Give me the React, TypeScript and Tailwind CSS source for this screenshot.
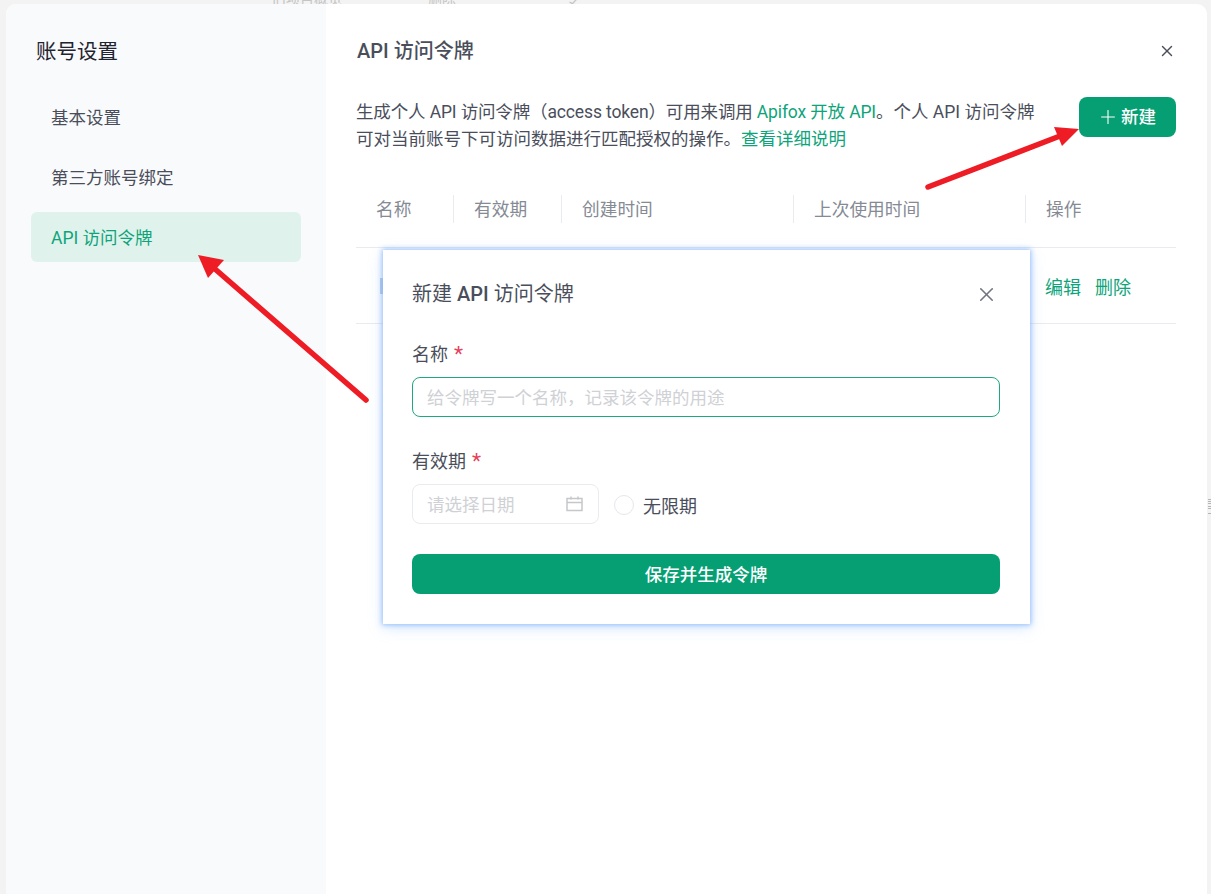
import React from "react";
import { X, Plus } from "lucide-react";

function Arrow({ d, head }: { d: string; head: string }) {
  return (
    <>
      <path d={d} stroke="#ee1c25" strokeWidth={5.5} strokeLinecap="round" fill="none" />
      <polygon points={head} fill="#ee1c25" />
    </>
  );
}

export default function App() {
  return (
    <div className="relative h-[894px] w-[1211px] overflow-hidden bg-[#f3f3f3] text-[17.5px] leading-[27px] text-[#4a4e5b] [font-family:Roboto,'Noto_Sans_CJK_SC',sans-serif]">
      <div className="flex h-[4px] overflow-hidden pl-[272px] text-[14px] leading-[8px] text-[#c4c4c4]">
        <span className="-mt-[5px] w-[156px]">旧项目概览</span>
        <span className="-mt-[5px] w-[137px]">删除</span>
        <span className="-mt-[5px]">令</span>
      </div>
      <div className="ml-[6px] flex h-[890px] w-[1201px] overflow-hidden rounded-t-[10px] bg-white">
        <aside className="flex w-[320px] flex-col bg-[#f9fafb] pl-[25px] pr-[25px]">
          <h2 className="mt-[35px] pl-[5px] text-[20.5px] leading-[27px] font-normal text-[#1f2430]">账号设置</h2>
          <nav className="mt-[26px] flex flex-col gap-[10px]">
            <div className="flex h-[50px] items-center rounded-[6px] pl-[20px] pt-[2px]">基本设置</div>
            <div className="flex h-[50px] items-center rounded-[6px] pl-[20px] pt-[2px]">第三方账号绑定</div>
            <div className="flex h-[50px] items-center rounded-[6px] bg-[#dff2ec] pl-[20px] pt-[2px] text-[#0ea47a]">API 访问令牌</div>
          </nav>
        </aside>
        <main className="flex flex-1 flex-col pl-[30px] pr-[31px]">
          <div className="mt-[32px] flex h-[30px] items-center justify-between">
            <h1 className="pl-[1px] text-[20px] font-medium leading-[30px] text-[#4a4e5b]">API 访问令牌</h1>
            <X className="h-[18px] w-[18px] text-[#4a4e5b]" strokeWidth={1.9} />
          </div>
          <div className="mt-[31px] flex items-start justify-between">
            <p className="mt-[2px] whitespace-nowrap">
              <span className="tracking-[-0.14px]">
                生成个人 API 访问令牌（access token）可用来调用 <span className="text-[#0ea47a]">Apifox 开放 API</span>
              </span>
              。个人 API 访问令牌
              <br />
              可对当前账号下可访问数据进行匹配授权的操作。<span className="text-[#0ea47a]">查看详细说明</span>
            </p>
            <button className="flex h-[40px] w-[97px] items-center gap-[2px] rounded-[8px] bg-[#059f73] pl-[18px] font-medium text-white">
              <Plus className="h-[22px] w-[22px]" strokeWidth={1.2} />
              新建
            </button>
          </div>
          <div className="mt-[28px] grid h-[67px] grid-cols-[97px_108px_232px_232px_151px] items-center border-b border-[#e9ebee] pb-[10px] text-[17.7px] text-[#858a95]">
            <div className="pl-[20px] pt-[2px]">名称</div>
            <div className="h-[28px] border-l border-[#e9ebee] pl-[20px] leading-[31px]">有效期</div>
            <div className="h-[28px] border-l border-[#e9ebee] pl-[20px] leading-[31px]">创建时间</div>
            <div className="h-[28px] border-l border-[#e9ebee] pl-[20px] leading-[31px]">上次使用时间</div>
            <div className="h-[28px] border-l border-[#e9ebee] pl-[20px] leading-[31px]">操作</div>
          </div>
          <div className="grid h-[76px] grid-cols-[97px_108px_232px_232px_151px] items-center border-b border-[#e9ebee]">
            <div className="pl-[24px]"><div className="h-[16px] w-[12px] bg-[#b9cde6]" /></div>
            <div />
            <div />
            <div />
            <div className="flex gap-[14px] pl-[20px] pt-[4px] text-[18px] text-[#0ea47a]">
              <span>编辑</span>
              <span>删除</span>
            </div>
          </div>
        </main>
      </div>

      <div className="absolute right-0 top-[499px] flex w-[3px] flex-col gap-[1px]">
        <div className="h-[1px] bg-[#b5b5b5]" />
        <div className="h-[1px] bg-[#b5b5b5]" />
        <div className="h-[1px] bg-[#b5b5b5]" />
        <div className="mt-[1px] h-[1px] bg-[#b5b5b5]" />
        <div className="h-[1px] bg-[#b5b5b5]" />
        <div className="mt-[3px] h-[1px] bg-[#b5b5b5]" />
      </div>

      <section className="absolute left-[383px] top-[250px] flex h-[374px] w-[647px] flex-col bg-white pl-[29px] pr-[30px] shadow-[0_0_5px_1px_rgba(120,175,250,0.75),0_4px_14px_rgba(120,175,250,0.28)]">
        <div className="mt-[29px] flex h-[30px] items-center justify-between">
          <h3 className="text-[20px] font-normal text-[#4a4e5b]">新建 <span className="font-medium">API</span> 访问令牌</h3>
          <X className="mr-[2px] h-[23px] w-[23px] text-[#71757f]" strokeWidth={1.6} />
        </div>
        <label className="mt-[32px] flex h-[27px] items-center text-[18px]">
          名称<span className="ml-[6px] text-[21px] text-[#e8405a]">*</span>
        </label>
        <div className="mt-[9px] flex h-[40px] items-center rounded-[8px] border border-[#1fa87f] pl-[14px] pt-[3px] text-[#cfd1d5]">
          给令牌写一个名称，记录该令牌的用途
        </div>
        <label className="mt-[31px] flex h-[27px] items-center text-[18px]">
          有效期<span className="ml-[6px] text-[21px] text-[#e8405a]">*</span>
        </label>
        <div className="mt-[9px] flex items-center">
          <div className="flex h-[40px] w-[187px] items-center justify-between rounded-[8px] border border-[#e9ebee] pl-[14px] pr-[15px] pt-[3px] text-[#cfd1d5]">
            请选择日期
            <svg className="-mt-[3px]" width="17" height="16" viewBox="0 0 17 16" fill="none" stroke="#c6c7ca" strokeWidth="1.5">
              <rect x="1" y="2.5" width="15" height="12" />
              <path d="M1 6.5h15M5 0.5v3M12 0.5v3" />
            </svg>
          </div>
          <div className="ml-[15px] mt-[2px] h-[20px] w-[20px] rounded-full border border-[#e5e7ea]" />
          <span className="ml-[9px] mt-[4px] text-[18px]">无限期</span>
        </div>
        <button className="mt-[30px] flex h-[40px] items-center justify-center rounded-[8px] bg-[#059f73] pt-[3px] font-medium text-white">
          保存并生成令牌
        </button>
      </section>

      <svg className="pointer-events-none absolute left-0 top-0" width="1211" height="894" viewBox="0 0 1211 894">
        <Arrow d="M928 187 L1060 136" head="1079,129 1054,127 1062,146" />
        <Arrow d="M366 400 L215 269" head="198,255 208,278 224,260" />
      </svg>
    </div>
  );
}
